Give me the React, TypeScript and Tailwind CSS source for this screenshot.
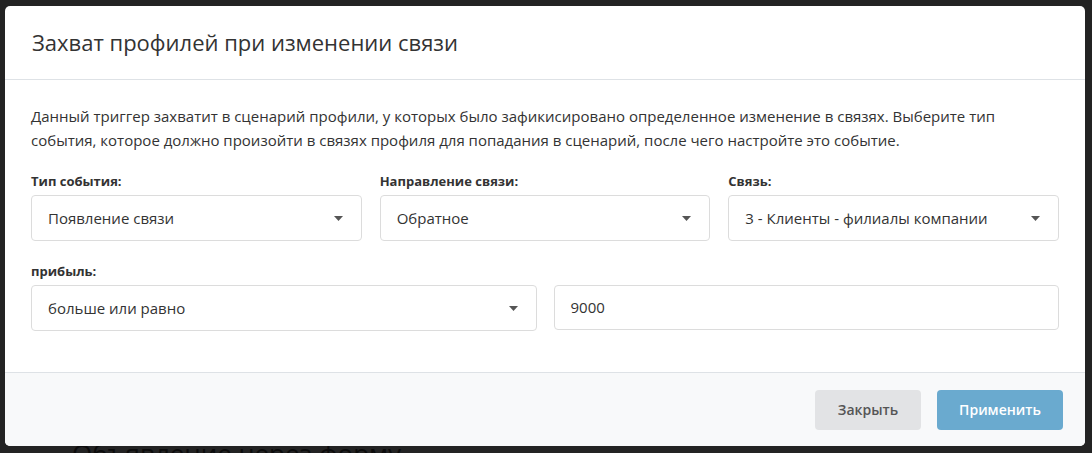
import React from "react";

function Caret() {
  return (
    <svg width="9" height="5" viewBox="0 0 9 5" className="shrink-0">
      <path d="M0 0 L9 0 L4.5 5 Z" fill="#555" />
    </svg>
  );
}

function Select({ value, className = "" }: { value: string; className?: string }) {
  return (
    <div
      className={`flex h-[46px] items-center justify-between rounded-[4px] border border-[#dcdcdc] bg-white pl-[16px] pr-[18px] text-[15px] text-[#333] ${className}`}
    >
      <span>{value}</span>
      <Caret />
    </div>
  );
}

function Label({ children }: { children: React.ReactNode }) {
  return <div className="mb-[4px] h-[20px] text-[13px] font-bold leading-[20px] text-[#333]">{children}</div>;
}

export default function App() {
  return (
    <div
      className="relative h-[453px] w-[1092px] overflow-hidden bg-[#232323] pl-[5px] pt-[6px]"
      style={{ fontFamily: '"Open Sans", "Noto Sans", sans-serif' }}
    >
      <div className="absolute left-[72px] top-[437px] text-[26px] leading-[32px] text-[#0c0c0c]">Объявление через форму</div>
      <div className="relative flex h-[440px] w-[1080px] flex-col overflow-hidden rounded-[5px] bg-white">
        <div className="flex h-[74px] shrink-0 items-center border-b border-[#dee2e6] pl-[27px]">
          <h1 className="text-[22px] font-normal text-[#333]">Захват профилей при изменении связи</h1>
        </div>
        <div className="flex-1 px-[26px] pt-[24px]">
          <p className="text-[15px] leading-[24px] text-[#333]">
            Данный триггер захватит в сценарий профили, у которых было зафикисировано определенное изменение в связях. Выберите тип события, которое должно произойти в связях профиля для попадания в сценарий, после чего настройте это событие.
          </p>
          <div className="mt-[19px] grid grid-cols-3 gap-x-[18px]">
            <div>
              <Label>Тип события:</Label>
              <Select value="Появление связи" />
            </div>
            <div>
              <Label>Направление связи:</Label>
              <Select value="Обратное" />
            </div>
            <div>
              <Label>Связь:</Label>
              <Select value="3 - Клиенты - филиалы компании" />
            </div>
          </div>
          <div className="mt-[20px]">
            <Label>прибыль:</Label>
            <div className="grid grid-cols-2 gap-x-[17px]">
              <Select value="больше или равно" className="h-[45px]" />
              <div className="flex h-[45px] items-center rounded-[4px] border border-[#dcdcdc] bg-white pl-[16px] text-[15px] text-[#333]">
                9000
              </div>
            </div>
          </div>
        </div>
        <div className="flex h-[74px] shrink-0 items-center justify-end gap-[16px] border-t border-[#dee2e6] bg-[#f8f9fa] pr-[22px]">
          <button className="h-[40px] w-[106px] rounded-[4px] bg-[#e2e3e5] text-[14px] font-semibold text-[#555]">Закрыть</button>
          <button className="h-[40px] w-[126px] rounded-[4px] bg-[#6aaacf] text-[14px] font-semibold text-white">Применить</button>
        </div>
      </div>
    </div>
  );
}
